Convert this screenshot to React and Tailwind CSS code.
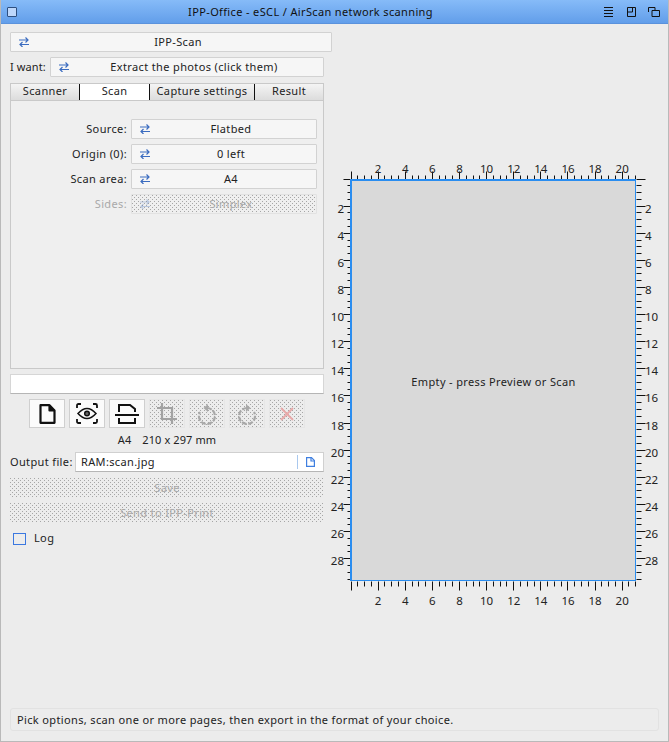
import React from "react";

const dots = "bg-[radial-gradient(circle_at_0.5px_0.5px,#a6a6a6_0.6px,transparent_0.6px),radial-gradient(circle_at_2.5px_2.5px,#a6a6a6_0.6px,transparent_0.6px)] bg-[length:4px_4px]";

function Swap({ muted }) {
  return (
    <svg width="10" height="10" viewBox="0 0 10 10" className={"shrink-0 " + (muted ? "opacity-30" : "")} fill="none" stroke="#3b6cc0" strokeWidth="1.2">
      <path d="M0 3H9M6.500 .5 9 3 6.500 5.500" />
      <path d="M10 7.500H1M3.500 5 1 7.500 3.500 10" />
    </svg>
  );
}

function Combo({ children, className = "", disabled }) {
  return (
    <div
      className={
        "flex h-5 items-center rounded-[1px] border " +
        (disabled ? "border-[#e2e2e2] text-[#a9a9a9] " + dots : "border-[#d2d2d2] bg-[#f6f6f6]") +
        " " + className
      }
    >
      <span className="ml-2 flex w-[10px]"><Swap muted={disabled} /></span>
      <span className="-mt-[2px] flex-1 pr-1 text-center">{children}</span>
    </div>
  );
}

function Row({ label, children, disabled }) {
  return (
    <div className="flex h-5 items-center">
      <span className={"-mt-[2px] w-[117px] pr-[4px] text-right " + (disabled ? "text-[#a9a9a9]" : "")}>{label}</span>
      <Combo className="w-[186px]" disabled={disabled}>{children}</Combo>
    </div>
  );
}

function Tab({ w, active, children, last }) {
  return (
    <div
      className={
        "flex h-[16px] items-center justify-center pb-[3px] " +
        (active ? "bg-white" : "bg-gradient-to-b from-[#f4f4f4] to-[#dcdcdc]") +
        (last ? "" : " border-r-[1px] border-[#111111]")
      }
      style={{ width: w }}
    >
      {children}
    </div>
  );
}

function ToolBtn({ children, disabled }) {
  return (
    <div
      className={
        "flex h-[29px] w-9 items-center justify-center " +
        (disabled ? "border border-[#e6e6e6] " + dots : "border border-[#cfcfcf] bg-[#fbfbfb]")
      }
    >
      {children}
    </div>
  );
}

function Ruler() {
  const unit = 13.56;
  const ox = 21.5, oy = 19.5;
  const right = 306.5, bottom = 420.5;
  const ticks = [];
  const labels = [];
  for (let i = 0; i * unit / 2 <= 285.5; i++) {
    const x = Math.round(ox + (i * unit) / 2) + 0.5 - 1;
    const len = i % 4 === 0 ? 8 : 4;
    ticks.push(`M${x} ${oy - len}V${oy}`);
    ticks.push(`M${x} ${bottom + 1}V${bottom + 1 + len + 1}`);
    if (i % 4 === 0 && i > 0) {
      labels.push(<text key={"t" + i} x={ox + (i * unit) / 2 - 0.5} y={12.5} textAnchor="middle">{i / 2}</text>);
      labels.push(<text key={"b" + i} x={ox + (i * unit) / 2 - 0.5} y={444.5} textAnchor="middle">{i / 2}</text>);
    }
  }
  for (let i = 0; i * unit / 2 <= 401; i++) {
    const y = Math.round(oy + (i * unit) / 2);
    const len = i % 4 === 0 ? 8 : 4;
    const yy = y + 0.5 - 1;
    ticks.push(`M${ox - len} ${yy}H${ox}`);
    ticks.push(`M${right} ${yy}H${right + len + 1}`);
    if (i % 4 === 0 && i > 0) {
      labels.push(<text key={"l" + i} x={14} y={y + 5.5} textAnchor="end">{i / 2}</text>);
      labels.push(<text key={"r" + i} x={315} y={y + 5.5}>{i / 2}</text>);
    }
  }
  return (
    <svg className="absolute left-0 top-0 tracking-normal" width="330" height="450" fontFamily="'Noto Sans', sans-serif" fontSize="11.5" fill="#222">
      <path d={ticks.join("")} stroke="#111" strokeWidth="1" fill="none" />
      {labels}
    </svg>
  );
}

export default function App() {
  return (
    <div className="flex h-[742px] w-[669px] flex-col overflow-hidden border-x border-b border-[#b9b9b9] bg-[#ececec] font-['Noto_Sans',sans-serif] text-[11px] leading-none tracking-[0.36px] text-[#222222]">
      <div className="relative flex h-6 shrink-0 items-center justify-center border-b border-[#5a92dc] bg-gradient-to-b from-[#86bbf8] to-[#629eea] pr-[48px] text-[#111111]">
        <span className="absolute left-[6px] top-[7px] h-[10px] w-[10px] rounded-[1px] border border-[#2d4f80] bg-[#bdd7fb]" />
        <span>IPP-Office - eSCL / AirScan network scanning</span>
        <div className="absolute right-[8px] top-[7px] flex items-center">
          <svg className="mr-[14px]" width="9" height="10" viewBox="0 0 9 10" stroke="#111" fill="none"><path d="M0 .5H9M0 3.500H9M0 6.500H9M0 9.500H9" /></svg>
          <svg className="mr-[12px]" width="9" height="10" viewBox="0 0 9 10" stroke="#111" fill="none"><path d="M.5.5H8.500V9.500H.5ZM5.500.5V5H.5" /></svg>
          <svg width="12" height="10" viewBox="0 0 12 10" stroke="#111" fill="none"><path d="M.5 5V.5H7V3M4 3.500H11.500V9.500H4Z" /></svg>
        </div>
      </div>

      <div className="flex min-h-0 flex-1">
        <div className="flex w-[323px] shrink-0 flex-col pl-[9px] pt-2">
          <Combo className="w-[322px]">IPP-Scan</Combo>
          <div className="mt-[5px] flex h-5 w-[314px] items-center">
            <span className="-mt-[2px] w-10 tracking-[0.1px]">I want:</span>
            <Combo className="flex-1">Extract the photos (click them)</Combo>
          </div>

          <div className="mt-[6px] flex h-[17px] w-[314px] border-x border-t border-[#c9c9c9]">
            <Tab w={69}>Scanner</Tab>
            <Tab w={70} active>Scan</Tab>
            <Tab w={105}>Capture settings</Tab>
            <Tab w={68} last>Result</Tab>
          </div>
          <div className="flex h-[269px] w-[314px] flex-col gap-[5px] border border-[#c9c9c9] bg-[#efefef] pt-[18px] pl-[3px]">
            <Row label="Source:">Flatbed</Row>
            <Row label="Origin (0):">0 left</Row>
            <Row label="Scan area:">A4</Row>
            <Row label="Sides:" disabled>Simplex</Row>
          </div>

          <div className="mt-[5px] h-5 w-[314px] border border-[#d6d6d6] border-b-[#b5b5b5] bg-white" />

          <div className="ml-[19px] mt-[5px] flex gap-1">
            <ToolBtn>
              <svg width="17" height="20" viewBox="0 0 17 20" fill="none" stroke="#111" strokeWidth="2.200" strokeLinejoin="round"><path d="M1.500 1.200H10.500L15.500 6.500V18.800H1.500Z" /><path d="M10.500 1.200V6.500H15.500" fill="#111" /></svg>
            </ToolBtn>
            <ToolBtn>
              <svg width="22" height="21" viewBox="0 0 22 21" fill="none" stroke="#111" strokeWidth="1.800"><path d="M1 5V2.500Q1 1 2.500 1H5M17 1H19.500Q21 1 21 2.500V5M21 16V18.500Q21 20 19.500 20H17M5 20H2.500Q1 20 1 18.500V16" /><path strokeWidth="1.500" d="M2 10.500Q11 .5 20 10.500Q11 20.500 2 10.500Z" /><circle cx="11" cy="10.500" r="2.300" fill="#666" strokeWidth="1.500" /></svg>
            </ToolBtn>
            <ToolBtn>
              <svg width="24" height="20" viewBox="0 0 24 20" fill="none" stroke="#111" strokeWidth="2"><path d="M4 8V1H15L20 5V8" /><path d="M0 11H24" /><path d="M4 14V19H20V14" /></svg>
            </ToolBtn>
            <ToolBtn disabled>
              <svg width="20" height="21" viewBox="0 0 20 21" fill="none" stroke="#a2a2a2" strokeWidth="2.200"><path d="M5 0V16H20" /><path d="M0 5H15V21" /></svg>
            </ToolBtn>
            <ToolBtn disabled>
              <svg width="20" height="22" viewBox="0 0 20 22" fill="none" stroke="#a8a8a8" strokeWidth="2.200"><path d="M10 5A8 8 0 1 1 3 9" strokeDasharray="5 1.500" /><path d="M11 1 6.500 5 11 9" fill="#a8a8a8" stroke="none" /></svg>
            </ToolBtn>
            <ToolBtn disabled>
              <svg width="20" height="22" viewBox="0 0 20 22" fill="none" stroke="#a8a8a8" strokeWidth="2.200"><path d="M10 5A8 8 0 1 0 17 9" strokeDasharray="5 1.500" /><path d="M9 1 13.500 5 9 9" fill="#a8a8a8" stroke="none" /></svg>
            </ToolBtn>
            <ToolBtn disabled>
              <svg width="14" height="14" viewBox="0 0 14 14" fill="none" stroke="#e8a9a9" strokeWidth="1.800"><path d="M1 1 13 13M13 1 1 13" /></svg>
            </ToolBtn>
          </div>

          <div className="mt-[6px] flex h-3 w-[314px] items-center justify-center gap-[11px] tracking-[0.1px]">
            <span className="-mt-[2px]">A4</span>
            <span className="-mt-[2px]">210 x 297 mm</span>
          </div>

          <div className="mt-[6px] flex h-5 w-[314px] items-center">
            <span className="-mt-[2px] w-[65px]">Output file:</span>
            <div className="flex h-5 flex-1 items-center border border-[#d0d0d0] border-b-[#b5b5b5] bg-white pl-[5px]">
              <span className="-mt-[2px] flex-1">RAM:scan.jpg</span>
              <span className="h-[14px] w-px bg-[#a9c8ee]" />
              <span className="flex w-[25px] justify-center">
                <svg width="9" height="10" viewBox="0 0 9 10" fill="none" stroke="#3f7fe0" strokeWidth="1.200"><path d="M.6.6H5.500L8.400 3.500V9.400H.6Z" /><path d="M5 .6V4H8.400" /></svg>
              </span>
            </div>
          </div>

          <div className={"mt-[6px] flex h-5 w-[314px] items-center justify-center pb-[2px] text-[#a9a9a9] " + dots}>Save</div>
          <div className={"mt-[5px] flex h-5 w-[314px] items-center justify-center pb-[2px] text-[#a9a9a9] " + dots}>Send to IPP-Print</div>

          <div className="mt-[9px] flex h-[13px] items-center pl-[3px]">
            <span className="h-[12px] w-[13px] border border-[#3b78e0] bg-[#ececec]" />
            <span className="-mt-[2px] ml-[8px]">Log</span>
          </div>
        </div>

        <div className="pl-[6px] pt-[136px]">
          <div className="relative h-[450px] w-[330px]">
            <Ruler />
            <div className="relative ml-[20px] mt-[19px] inline-flex h-[402px] w-[286px] items-center justify-center border-b border-r border-l-2 border-t-2 border-[#2a8df0] bg-[#d9d9d9] pt-[1px]">
              Empty - press Preview or Scan
            </div>
          </div>
        </div>
      </div>

      <div className="mx-[9px] mb-[10px] flex h-[23px] items-center rounded-[3px] border border-[#e2e2e2] px-[6px] pb-[1px]">
        Pick options, scan one or more pages, then export in the format of your choice.
      </div>
    </div>
  );
}
